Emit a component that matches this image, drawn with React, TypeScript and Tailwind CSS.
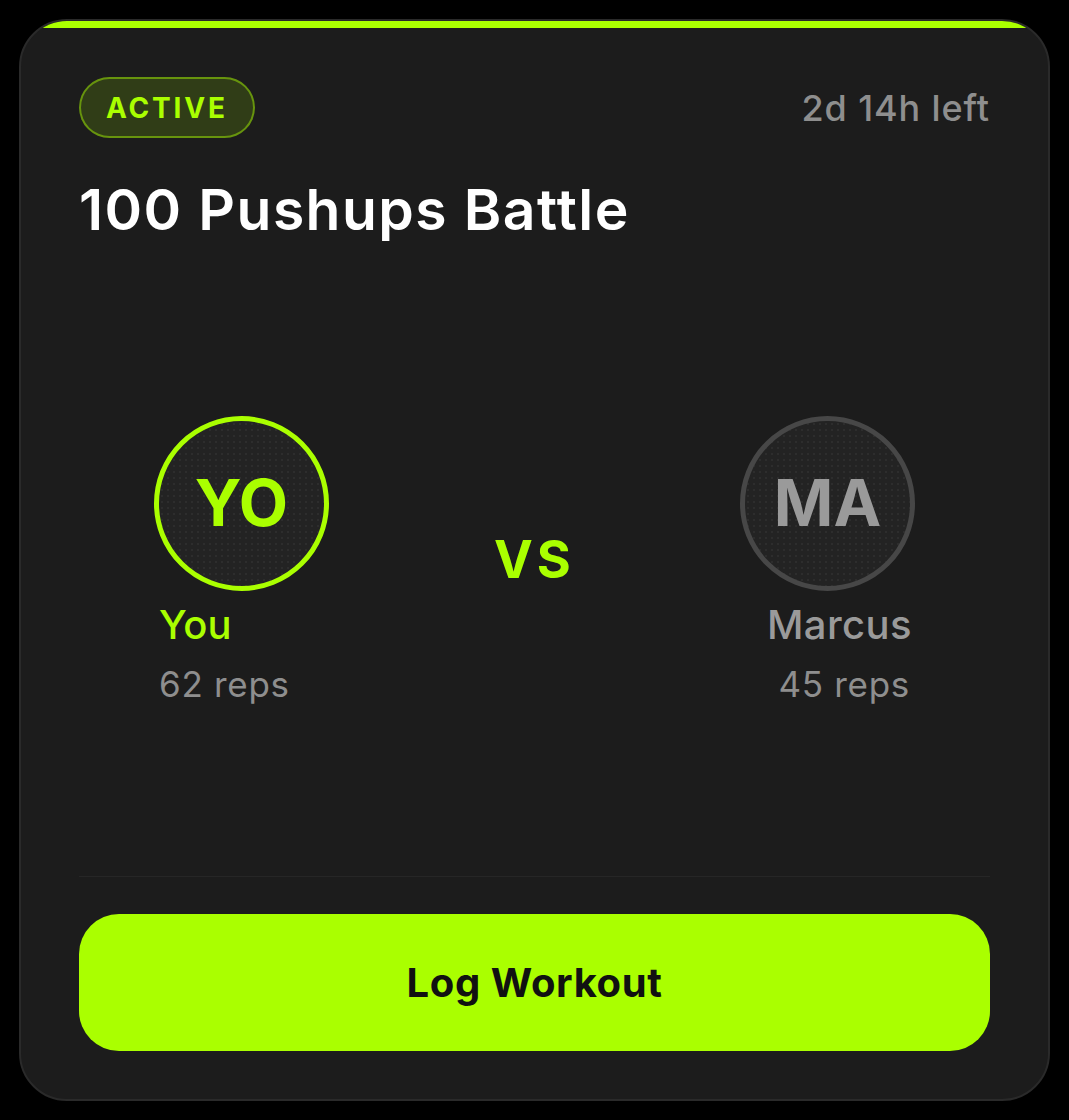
export default function App() {
    return (
        <div className="min-h-screen bg-black p-[19px] font-['Inter',_sans-serif]">
            <div className="flex h-[1082px] flex-col overflow-hidden rounded-[48px] border-2 border-[#2a2a2a] bg-[#1c1c1c]">
                <div className="h-[7px] shrink-0 bg-[#aaff00]" />
                <div className="flex flex-1 flex-col px-[58px] pt-[49px] pb-[48px]">
                    {/* header */}
                    <div className="flex items-center justify-between">
                        <span className="flex h-[61px] items-center rounded-full border-2 border-[#aaff00]/45 bg-[#aaff00]/15 px-[25px] text-[28px] font-bold tracking-[0.1em] text-[#aaff00]">
                            ACTIVE
                        </span>
                        <span className="text-[36px] font-medium tracking-[0.025em] text-[#8e8e8e]">2d 14h left</span>
                    </div>
                    <h1 className="mt-[38px] text-[57px] leading-[1.2] font-semibold tracking-[0.025em] text-white">
                        100 Pushups Battle
                    </h1>

                    {/* matchup */}
                    <div className="flex flex-1 items-center justify-between px-[75px]">
                        <div className="flex flex-col items-start">
                            <div className="flex h-[175px] w-[175px] items-center justify-center rounded-full border-[5px] border-[#aaff00] bg-[#232323] bg-[radial-gradient(circle,#2d2d2d_1px,transparent_1px)] bg-[length:6px_6px]">
                                <span className="text-[64px] font-bold text-[#aaff00]">YO</span>
                            </div>
                            <span className="mt-[10px] pl-[5px] text-[40px] leading-[1.2] font-medium text-[#aaff00]">You</span>
                            <span className="mt-[14px] pl-[5px] text-[35px] leading-[1.2] tracking-[0.02em] text-[#8e8e8e]">62 reps</span>
                        </div>
                        <span className="text-[52px] font-bold tracking-[0.08em] text-[#aaff00]">VS</span>
                        <div className="flex flex-col items-end">
                            <div className="flex h-[175px] w-[175px] items-center justify-center rounded-full border-[5px] border-[#474747] bg-[#232323] bg-[radial-gradient(circle,#2d2d2d_1px,transparent_1px)] bg-[length:6px_6px]">
                                <span className="text-[64px] font-bold text-[#9a9a9a]">MA</span>
                            </div>
                            <span className="mt-[10px] pr-[3px] text-[40px] leading-[1.2] font-medium tracking-[0.01em] text-[#9a9a9a]">Marcus</span>
                            <span className="mt-[14px] pr-[5px] text-[35px] leading-[1.2] tracking-[0.02em] text-[#8e8e8e]">45 reps</span>
                        </div>
                    </div>

                    <div className="h-px bg-[#262626]" />
                    <button className="mt-[37px] h-[137px] w-full rounded-[40px] bg-[#aaff00] text-[40px] font-bold tracking-[0.015em] text-[#111111]">
                        Log Workout
                    </button>
                </div>
            </div>
        </div>
    )
}
